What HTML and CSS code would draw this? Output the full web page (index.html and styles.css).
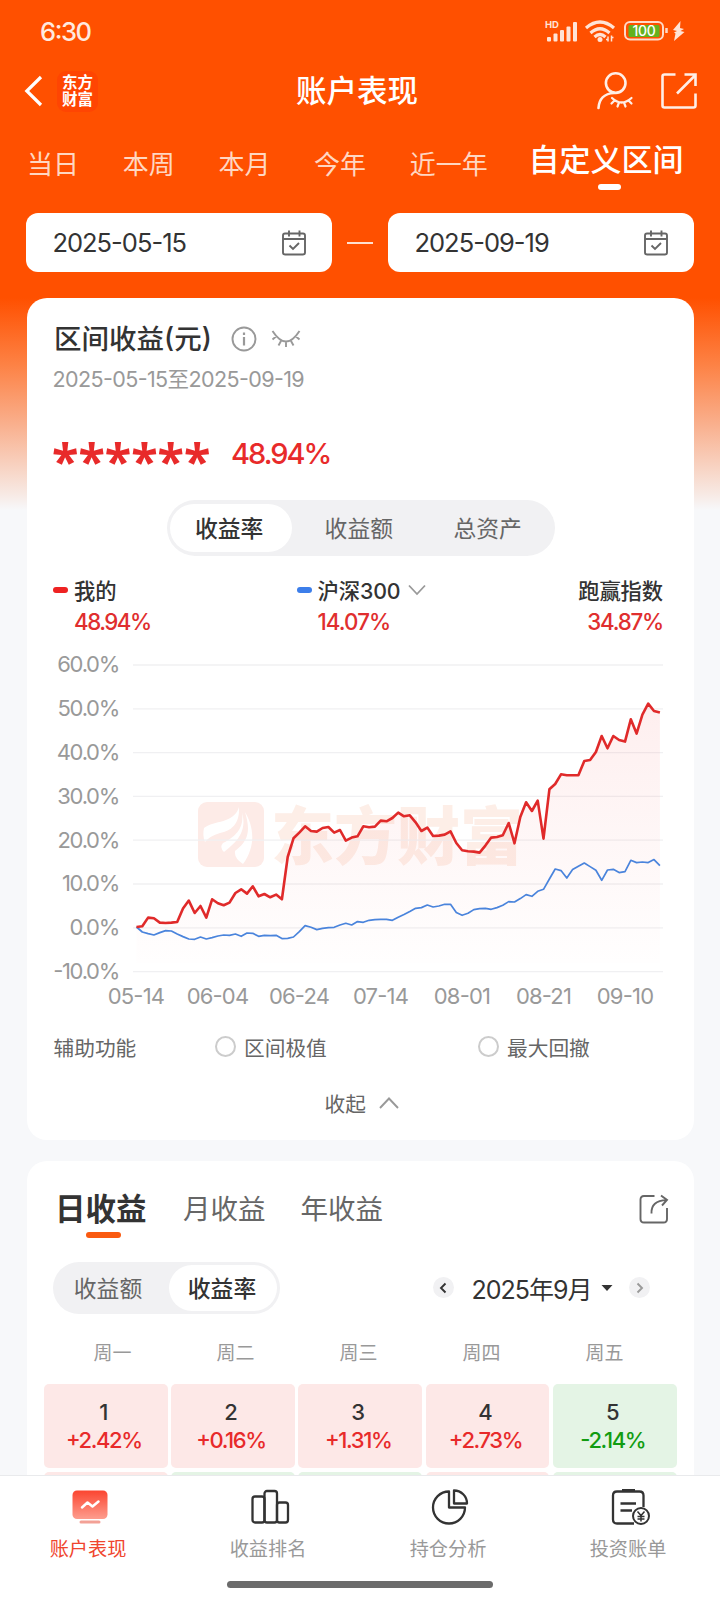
FILE: index.html
```html
<!DOCTYPE html>
<html lang="zh-CN">
<head>
  <meta charset="UTF-8" />
  <meta name="viewport" content="width=device-width, initial-scale=1.0" />
  <title>账户表现</title>
  <link rel="stylesheet" href="styles.css">
</head>
<body>

  <header>
    <div class="status">
      <span class="time">6:30</span>
      <svg width="144" height="26" viewBox="0 0 144 26" fill="none">
        <text class="hd" x="4" y="10">HD</text>
        <g fill="#ffe3d6">
          <rect x="6" y="19" width="4" height="4.500" rx="1" />
          <rect x="12.500" y="15.500" width="4" height="8" rx="1" />
          <rect x="19" y="12" width="4" height="11.500" rx="1" />
          <rect x="25.500" y="8.500" width="4" height="15" rx="1" />
          <rect x="32" y="4" width="4" height="19.500" rx="1" />
        </g>
        <g stroke="#ffe3d6" stroke-width="3.200">
          <path d="M45 10 Q59 -2 73 10" />
          <path d="M49.500 15 Q59 6.500 68.500 15" />
          <path d="M53.500 19 Q59 14 64.500 19" />
        </g>
        <circle cx="59" cy="21.500" r="2.500" fill="#ffe3d6" />
        <path d="M67 18.500v5M70.500 17.500v6M65 21.500h2M70.500 19.500h2" stroke="#ffe3d6" stroke-width="1.500" />
        <rect x="84" y="4" width="38" height="17.500" rx="5" stroke="#ffd9c8" stroke-width="2" />
        <rect x="87.500" y="7" width="31" height="12" rx="1.500" fill="#63b11e" />
        <text class="charge" x="103" y="18" text-anchor="middle">100</text>
        <path d="M125.500 10v5" stroke="#ffd9c8" stroke-width="2.500" />
        <path d="M139.500 3L132 12l4 1-3 1.500 1.500 1-1.500 7.500L143.500 14l-4-1 3.500-2-4-1z" fill="#ffe3d6" />
      </svg>
    </div>

    <div class="titulo">
      <svg class="back" width="20" height="32" viewBox="0 0 20 32" fill="none" stroke="#fff" stroke-width="3.200"><path d="M17 2 2.800 16 17 30" /></svg>
      <div class="brand"><span>东方</span><span>财富</span></div>
      <h1>账户表现</h1>
      <svg class="user" width="40" height="40" viewBox="0 0 40 40" fill="none" stroke="#ffeee6" stroke-width="2.600" stroke-linecap="round">
        <circle cx="20.700" cy="12.100" r="9.800" />
        <path d="M3.500 37C4 28.500 9 22.500 19 22" />
        <path d="M17 27q9.500 9 19.500 0M19.500 29.500l-3 3M24 31.500l-1.500 4M29 31.500l1.500 4M33.500 29.500l3 3" stroke-width="2.200" />
      </svg>
      <svg width="38" height="38" viewBox="0 0 38 38" fill="none" stroke="#ffeee6" stroke-width="2.600">
        <path d="M15.500 2.500H4.500Q2.500 2.500 2.500 4.500V33.500Q2.500 35.500 4.500 35.500H33.500Q35.500 35.500 35.500 33.500V21.500" />
        <path d="M17 21.500 35 3.500M24.500 2.500H35.500V14" />
      </svg>
    </div>

    <nav class="periods">
      <a>当日</a><a>本周</a><a>本月</a><a>今年</a><a>近一年</a><a class="on">自定义区间</a>
    </nav>

    <div class="dates">
      <div class="date">
        <span>2025-05-15</span>
        <svg width="26" height="26" viewBox="0 0 26 26" fill="none" stroke="#666" stroke-width="1.900"><rect x="2" y="3.500" width="22" height="21" rx="2" /><path d="M2 9h22M8 .5v6M18.500 .5v6M8.500 15.500l3.500 3.500 6-6" /></svg>
      </div>
      <i></i>
      <div class="date">
        <span>2025-09-19</span>
        <svg width="26" height="26" viewBox="0 0 26 26" fill="none" stroke="#666" stroke-width="1.900"><rect x="2" y="3.500" width="22" height="21" rx="2" /><path d="M2 9h22M8 .5v6M18.500 .5v6M8.500 15.500l3.500 3.500 6-6" /></svg>
      </div>
    </div>
  </header>

  <section class="card income">
    <div class="income-title">
      <h2>区间收益(元)</h2>
      <svg width="26" height="26" viewBox="0 0 26 26" fill="none" stroke="#999" stroke-width="1.900"><circle cx="13" cy="13" r="11.500" /><path d="M13 11v8.500M13 6.500v2.500" stroke-width="2.200" /></svg>
      <svg class="eye" width="30" height="18" viewBox="0 0 30 18" fill="none" stroke="#999" stroke-width="1.900"><path d="M1.500 1Q15 22 28.500 1M5 6.500 1.500 9.500M10 11l-2.500 4.500M15 11.500V17M20 11l2.500 4.500M25 6.500l3.500 3" /></svg>
    </div>
    <p class="range">2025-05-15至2025-09-19</p>
    <p class="total"><span class="stars">******</span><span class="pct">48.94%</span></p>

    <div class="segment seg-main">
      <span class="on">收益率</span><span>收益额</span><span>总资产</span>
    </div>

    <div class="legend">
      <div class="item mine"><b>我的</b><em>48.94%</em></div>
      <div class="item index">
        <b>沪深300 <svg width="20" height="12" viewBox="0 0 20 12" fill="none" stroke="#999" stroke-width="1.800"><path d="M2 1.500l8 8.500 8-8.500" /></svg></b>
        <em>14.07%</em>
      </div>
      <div class="item beat"><b>跑赢指数</b><em>34.87%</em></div>
    </div>

    <svg class="chart" width="667" height="370" viewBox="27 645 667 370">
      <defs>
        <linearGradient id="area" gradientUnits="userSpaceOnUse" x1="0" y1="700" x2="0" y2="963">
          <stop offset="0" stop-color="#f03030" stop-opacity="0.080" />
          <stop offset="1" stop-color="#f03030" stop-opacity="0.005" />
        </linearGradient>
      </defs>
      <!-- marca de agua -->
      <rect x="198" y="802" width="66" height="65" rx="9" fill="#fdebe7" />
      <g fill="#fff">
        <path d="M204 828C214 820 234 824 239 807C240 824 231 831 220 833C213 835 208 838 205 842C203 838 203 832 204 828Z" />
        <path d="M241 808C246 826 237 836 223 843Q219 847 224 852C234 844 246 834 243 817Z" />
        <path d="M245 812C250 829 250 840 235 851Q234 858 243 864C257 845 253 825 245 812Z" />
      </g>
      <text class="mark" x="271" y="859">东方财富</text>
      <g id="grid"></g>
      <polygon id="fill" fill="url(#area)" />
      <polyline id="blue" fill="none" stroke="#4a84dc" stroke-width="1.700" stroke-linejoin="round" />
      <polyline id="red" fill="none" stroke="#e02a2a" stroke-width="2.600" stroke-linejoin="round" />
    </svg>

    <div class="tools">
      <span class="tools-name">辅助功能</span>
      <label><i></i>区间极值</label>
      <label><i></i>最大回撤</label>
    </div>
    <div class="fold">收起<svg width="22" height="14" viewBox="0 0 22 14" fill="none" stroke="#999" stroke-width="1.900"><path d="M2 12l9-9.500L20 12" /></svg></div>
  </section>

  <section class="card calendar">
    <div class="cal-tabs">
      <span class="on">日收益</span><span>月收益</span><span>年收益</span>
      <svg width="30" height="30" viewBox="0 0 30 30" fill="none" stroke="#666" stroke-width="1.900">
        <path d="M15.500 2H5Q1.500 2 1.500 5.500V25Q1.500 28.500 5 28.500H24.500Q28 28.500 28 25V14" />
        <path d="M12.500 19.500C12 11 17 6.500 27.500 6M22 1.500l6 4.500-5 5.500" />
      </svg>
    </div>
    <div class="cal-bar">
      <div class="segment seg-cal"><span>收益额</span><span class="on">收益率</span></div>
      <i class="arrow"><svg width="9" height="12" viewBox="0 0 9 12" fill="none" stroke="#333" stroke-width="1.900"><path d="M6.500 1.500 2 6l4.500 4.500" /></svg></i>
      <span class="month">2025年9月</span>
      <svg class="caret" width="12" height="6" viewBox="0 0 12 6"><path d="M.5 0h11L6 6z" fill="#333" /></svg>
      <i class="arrow"><svg width="9" height="12" viewBox="0 0 9 12" fill="none" stroke="#999" stroke-width="1.900"><path d="M2.500 1.500 7 6l-4.500 4.500" /></svg></i>
    </div>
    <div class="week"><span>周一</span><span>周二</span><span>周三</span><span>周四</span><span>周五</span></div>
    <div class="days">
      <div class="up">1<b>+2.42%</b></div>
      <div class="up">2<b>+0.16%</b></div>
      <div class="up">3<b>+1.31%</b></div>
      <div class="up">4<b>+2.73%</b></div>
      <div class="down">5<b>-2.14%</b></div>
      <div class="up"></div>
      <div class="down"></div>
      <div class="down"></div>
      <div class="up"></div>
      <div class="down"></div>
    </div>
  </section>

  <footer>
    <nav class="tabbar">
      <a class="on">
        <svg width="40" height="38" viewBox="0 0 40 38" fill="none">
          <defs><linearGradient id="tab" x1="0" y1="0" x2="0" y2="1"><stop offset="0" stop-color="#fb4530" /><stop offset="1" stop-color="#fd9d8e" /></linearGradient></defs>
          <rect x="2.500" y="2.500" width="35" height="28.500" rx="4.500" fill="url(#tab)" />
          <path d="M12 19.500l5.500-5 5 4 6-5" stroke="#fff" stroke-width="2.500" stroke-linecap="round" stroke-linejoin="round" />
          <path d="M11 34h18" stroke="#f3a196" stroke-width="3" stroke-linecap="round" />
        </svg>
        账户表现
      </a>
      <a>
        <svg width="40" height="38" viewBox="0 0 40 38" fill="none" stroke="#333" stroke-width="2.300"><rect x="2.500" y="8.500" width="12" height="26" rx="2.500" /><rect x="14.500" y="3" width="12.500" height="31.500" rx="2.500" /><rect x="27" y="14.500" width="11" height="20" rx="2.500" /></svg>
        收益排名
      </a>
      <a>
        <svg width="40" height="38" viewBox="0 0 40 38" fill="none" stroke="#333" stroke-width="2.300" stroke-linejoin="round"><path d="M19 3.500A16 16 0 1 0 35 19.500H19Z" /><path d="M24 2.500A13 13 0 0 1 37 15.500H24Z" /></svg>
        持仓分析
      </a>
      <a>
        <svg width="40" height="38" viewBox="0 0 40 38" fill="none" stroke="#333" stroke-width="2.300">
          <path d="M24 35.500H7Q3 35.500 3 31.500V7.500Q3 3.500 7 3.500H29.500Q33.500 3.500 33.500 7.500V19" />
          <path d="M12 2.500H25" stroke-width="3" /><path d="M10.500 15.500H26M10.500 22.500H22" stroke-width="2.600" />
          <circle cx="31" cy="28" r="8" fill="#fff" stroke-width="2" />
          <path d="M27.500 23.500l3.500 4 3.500-4M31 27.500v6M27.500 28.500h7M27.500 31h7" stroke-width="1.500" />
        </svg>
        投资账单
      </a>
    </nav>
    <div class="home"></div>
  </footer>

  <script>
    // alturas de cada día, 3 unidades por píxel desde y = 640
    const mine = [860,858,832,834,847,848,847,845,805,781,818,797,832,777,789,795,787,758,747,760,738,768,761,771,763,777,650,594,577,558,572,574,563,560,577,569,601,592,588,558,561,559,541,543,533,517,528,525,546,572,562,587,586,583,573,608,630,633,634,637,616,592,590,585,548,609,530,486,512,481,595,447,431,402,405,405,405,362,359,335,287,324,287,299,304,237,280,223,190,212,217];
    const index = [860,875,880,884,877,871,872,881,889,896,897,890,896,892,887,884,885,881,888,878,879,888,885,886,885,895,894,890,874,856,861,868,864,862,861,854,849,854,844,846,840,838,837,837,840,831,823,814,804,802,794,800,797,792,792,817,825,819,808,805,804,807,802,795,784,785,775,763,768,753,747,716,686,691,713,688,678,668,679,690,720,689,687,697,694,660,667,665,667,658,676];
    const toPoints = list => list.map((v, i) => `${(136.5 + i * 5.815).toFixed(1)},${(640.3 + v / 3).toFixed(1)}`).join(' ');

    document.getElementById('red').setAttribute('points', toPoints(mine));
    document.getElementById('blue').setAttribute('points', toPoints(index));
    document.getElementById('fill').setAttribute('points', `136.5,963 ${toPoints(mine)} 660,963`);

    let html = '';
    for (let i = 0; i < 8; i++) {
      const y = 665 + i * 43.8;
      html += `<path d="M133 ${y}H663" stroke="#f0f0f2" stroke-width="1.3"/>`;
      html += `<text class="axis axis-y" x="119" y="${y + 7.4}" text-anchor="end">${60 - i * 10}.0%</text>`;
    }
    ['05-14', '06-04', '06-24', '07-14', '08-01', '08-21', '09-10'].forEach((d, i) => {
      html += `<text class="axis" x="${136 + i * 81.5}" y="1004" text-anchor="middle">${d}</text>`;
    });
    document.getElementById('grid').innerHTML = html;
  </script>
</body>
</html>
```
FILE: styles.css
```css
* {
  box-sizing: border-box;
}
body {
  margin: 0;
  width: 720px;
  height: 1600px;
  overflow: hidden;
  background: #f7f8fa linear-gradient(#ff5000 0, #ff5000 298px, #fd8245 365px, #f9b08e 425px, #f7eae5 495px, #f7f8fa 510px) no-repeat;
  font-family: "Inter", "Noto Sans CJK SC", sans-serif;
  font-feature-settings: "case";
  color: #333;
}
h1, h2, p {
  margin: 0;
}
h1, h2 {
  font-weight: 500;
}
svg {
  display: block;
  flex: none;
}
i, em {
  font-style: normal;
}

/* cabecera */
header {
  height: 298.4px;
}
.status {
  display: flex;
  justify-content: space-between;
  align-items: center;
  height: 62px;
  padding: 0 35px 0 40px;
}
.time {
  font-size: 25.5px;
  font-weight: 500;
  letter-spacing: -1.4px;
  color: #ffe9df;
}
.hd {
  font-size: 9.5px;
  font-weight: 700;
  fill: #ffe3d6;
}
.charge {
  font-size: 14px;
  font-weight: 500;
  letter-spacing: -0.3px;
  fill: #fff;
}
.titulo {
  display: flex;
  align-items: center;
  height: 58px;
  padding: 0 22px 0 24px;
}
.brand {
  width: 41px;
  height: 41px;
  margin-left: 13px;
  padding-top: 3px;
  border-radius: 9px;
  background: #ff4502;
  color: #fff;
  font-size: 15.5px;
  font-weight: 700;
  line-height: 17px;
  text-align: center;
}
.brand span {
  display: block;
}
h1 {
  flex: 1;
  padding-left: 21px;
  font-size: 30.5px;
  line-height: 40px;
  text-align: center;
  color: #fff;
}
.user {
  margin-right: 25px;
}
.periods {
  display: flex;
  height: 93px;
  padding: 25px 0 0 27px;
  font-size: 26px;
  line-height: 40px;
  color: #ffd7c2;
}
.periods a {
  margin-right: 43.7px;
}
.periods .on {
  position: relative;
  height: 60px;
  margin: -5px 0 0 -3px;
  font-size: 31px;
  font-weight: 500;
  color: #fff;
}
.periods .on::after {
  content: "";
  position: absolute;
  left: 69px;
  top: 44px;
  width: 23px;
  height: 6px;
  border-radius: 3px;
  background: #fff;
}
.dates {
  display: flex;
  justify-content: space-between;
  align-items: center;
  padding: 0 26px 0 26.4px;
}
.date {
  display: flex;
  justify-content: space-between;
  align-items: center;
  width: 305.5px;
  height: 59px;
  padding: 0 25px 0 26px;
  border-radius: 12px;
  background: #fff;
  font-size: 25.5px;
  letter-spacing: -1px;
}
.dates i {
  width: 26px;
  height: 2px;
  background: #ffe0d0;
}

/* tarjetas */
.card {
  width: 667.5px;
  margin: 0 26px 0 26.5px;
  border-radius: 20px;
  background: #fff;
}
.income {
  height: 842px;
  padding-top: 20.2px;
}
.income-title {
  display: flex;
  align-items: center;
  height: 40px;
  padding-left: 27.5px;
}
.income-title h2 {
  width: 176.5px;
  font-size: 27.5px;
  line-height: 40px;
  white-space: nowrap;
}
.eye {
  margin-left: 14px;
}
.range {
  padding-left: 26px;
  font-size: 21.5px;
  line-height: 40px;
  letter-spacing: -0.6px;
  color: #999;
}
.total {
  display: flex;
  height: 80px;
  margin-top: 15.8px;
  padding-left: 25.5px;
  line-height: 80px;
  color: #e82a2a;
}
.stars {
  width: 179px;
  font-family: "Noto Sans", sans-serif;
  font-size: 48.7px;
  font-weight: 700;
  line-height: 93px;
}
.pct {
  font-size: 29px;
  font-weight: 500;
  letter-spacing: -2px;
}
.segment {
  display: flex;
  border-radius: 28px;
  background: #f1f1f3;
  font-size: 22.8px;
  color: #666;
}
.segment span {
  border-radius: 28px;
  text-align: center;
}
.segment .on {
  background: #fff;
  color: #333;
  font-weight: 500;
}
.seg-main {
  width: 388px;
  height: 56px;
  margin: 6px 0 0 140.5px;
  padding: 4px 3px;
}
.seg-main span {
  width: 129.5px;
  line-height: 49px;
}
.seg-main .on {
  width: 123px;
  margin-right: 2px;
  padding-right: 4px;
}
.legend {
  display: flex;
  height: 84px;
  margin-top: 16px;
}
.item b, .item em {
  display: flex;
  align-items: center;
  height: 32px;
  font-size: 21.3px;
  font-weight: 500;
}
.item b {
  letter-spacing: -0.1px;
}
.item em {
  font-size: 22.3px;
  letter-spacing: -1.5px;
  color: #e02e2e;
}
.item {
  padding-top: 1.5px;
}
.mine, .index {
  padding-left: 22px;
}
.mine b::before, .index b::before {
  content: "";
  width: 15px;
  height: 6px;
  margin: 1px 6px 0 -22px;
  border-radius: 3px;
  background: #ee2222;
}
.mine em, .index em {
  margin-left: -1px;
}
.mine {
  width: 243.5px;
  margin-left: 26.5px;
}
.index {
  width: 260px;
}
.index em {
  letter-spacing: -0.9px;
}
.index b::before {
  background: #3c7eea;
}
.index b svg {
  margin-left: 7px;
}
.beat {
  width: 106.5px;
}
.beat b, .beat em {
  justify-content: flex-end;
}
.beat em {
  letter-spacing: -1.2px;
}
.chart {
  margin: -11px 0 0 0.5px;
}
.axis {
  font-size: 22px;
  letter-spacing: -0.8px;
  fill: #999;
}
.axis-y {
  letter-spacing: -1.3px;
}
.mark {
  font-size: 63px;
  font-weight: 900;
  fill: #fdeee7;
}
.tools {
  display: flex;
  align-items: center;
  height: 40px;
  margin-top: 11.5px;
  padding-left: 27px;
  font-size: 20.7px;
  color: #666;
}
.tools-name {
  flex: none;
  width: 161.5px;
}
.tools label {
  display: flex;
  flex: none;
  align-items: center;
  width: 263px;
}
.tools i {
  width: 21px;
  height: 21px;
  margin-right: 8px;
  border: 2px solid #ccc;
  border-radius: 50%;
}
.fold {
  display: flex;
  justify-content: center;
  align-items: center;
  gap: 12px;
  height: 40px;
  margin-top: 16.5px;
  padding-left: 4px;
  font-size: 20.7px;
  color: #666;
}

/* calendario */
.calendar {
  height: 440px;
  margin-top: 20.6px;
  padding-top: 28.5px;
}
.cal-tabs {
  display: flex;
  height: 72.5px;
  padding: 0 25px 0 28.5px;
  font-size: 27.5px;
  line-height: 40px;
  color: #666;
}
.cal-tabs span {
  width: 117.5px;
}
.cal-tabs .on {
  position: relative;
  width: 128px;
  font-size: 30.5px;
  font-weight: 600;
  color: #333;
}
.cal-tabs .on::after {
  content: "";
  position: absolute;
  left: 31px;
  top: 43px;
  width: 35px;
  height: 6px;
  border-radius: 3px;
  background: #fa5a10;
}
.cal-tabs svg {
  margin: 5px 0 0 auto;
}
.cal-bar {
  display: flex;
  align-items: center;
  padding-left: 26.5px;
}
.seg-cal {
  width: 227px;
  height: 52px;
  margin-right: 153px;
  padding: 3px;
}
.seg-cal span {
  width: 108px;
  padding-right: 2px;
  line-height: 47px;
}
.seg-cal span:first-child {
  margin-right: 5px;
  padding-right: 4px;
}
.arrow {
  display: flex;
  justify-content: center;
  align-items: center;
  width: 21px;
  height: 21px;
  border-radius: 50%;
  background: #f1f1f3;
}
.month {
  width: 129px;
  margin-left: 17.5px;
  font-size: 25px;
  letter-spacing: -1px;
  white-space: nowrap;
}
.caret {
  margin-right: 16.5px;
}
.week {
  display: flex;
  height: 69.5px;
  padding-left: 24.5px;
  font-size: 19px;
  line-height: 80px;
  color: #999;
}
.week span {
  width: 123px;
  text-align: center;
}
.days {
  display: grid;
  grid-template-columns: repeat(5, 1fr);
  grid-auto-rows: 84px;
  gap: 3.7px;
  padding: 0.5px 17.5px;
}
.days div {
  padding: 14px 4px 0 0;
  border-radius: 5px;
  font-size: 22px;
  font-weight: 500;
  line-height: 28px;
  text-align: center;
}
.days b {
  display: block;
  font-weight: 500;
  letter-spacing: -1.4px;
}
.up {
  background: #fde8e7;
}
.up b {
  color: #e82a2a;
}
.down {
  background: #e4f4e5;
}
.down b {
  color: #119c11;
}

/* barra inferior */
footer {
  position: fixed;
  left: 0;
  top: 1475px;
  width: 720px;
  height: 125px;
  border-top: 1px solid #e9eaec;
  background: #fff;
}
.tabbar {
  display: flex;
  height: 105px;
}
.tabbar a {
  display: flex;
  flex-direction: column;
  align-items: center;
  width: 180px;
  padding: 12px 4px 0 0;
  font-size: 19.2px;
  line-height: 46px;
  color: #999;
}
.tabbar svg {
  margin-left: 4px;
}
.tabbar .on {
  color: #f0452e;
}
.home {
  width: 266px;
  height: 7px;
  margin: 0 auto;
  border-radius: 4px;
  background: #6b6b6b;
}
```
